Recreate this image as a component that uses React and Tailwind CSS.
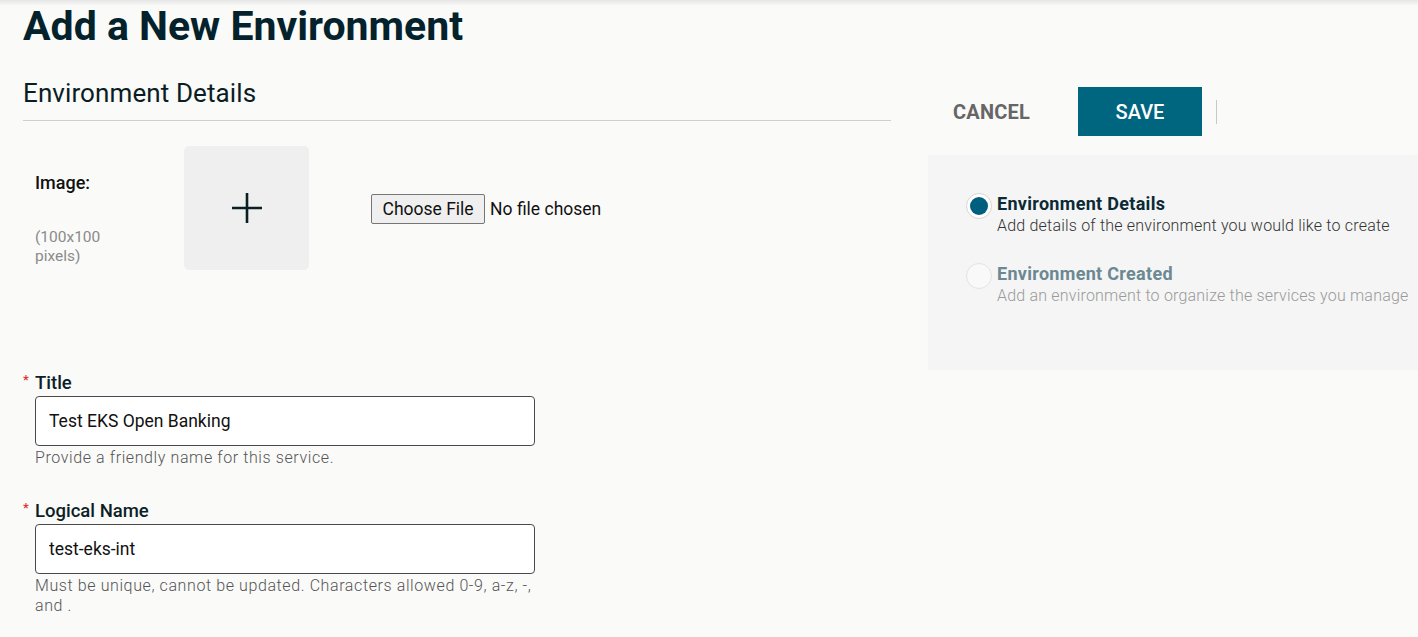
function Field({ label, value, help }) {
  return (
    <div className="flex flex-col">
      <label className="flex items-start text-[18.5px] leading-[22px] font-medium text-[#0d1f26]">
        <span className="w-[12px] pt-[1px] text-[13px] leading-[14px] text-[#d9342b]">*</span>
        <span>{label}</span>
      </label>
      <div className="pl-[12px]">
        <input
          readOnly
          value={value}
          className="mt-[2px] h-[50px] w-[500px] rounded-[4px] border border-[#4a4a4a] bg-white px-[13px] text-[17.5px] text-[#111] outline-none"
        />
        <p className="mt-[2px] w-[500px] text-[16px] leading-[20px] font-light tracking-[0.6px] text-[#555]">
          {help}
        </p>
      </div>
    </div>
  );
}

function Step({ active, title, text }) {
  return (
    <div className="flex items-start gap-[5px]">
      <div
        className={
          active
            ? "flex h-[26px] w-[26px] shrink-0 items-center justify-center rounded-full border border-[#d6d6d6] bg-white"
            : "h-[26px] w-[26px] shrink-0 rounded-full border border-[#e3e3e3] bg-[#f9f9f9]"
        }
      >
        {active && <div className="h-[18px] w-[18px] rounded-full bg-[#005f7f]" />}
      </div>
      <div className="flex flex-col">
        <span
          className={
            active
              ? "text-[18px] leading-[22px] font-bold tracking-[0.3px] text-[#0b2a35]"
              : "text-[18px] leading-[22px] font-bold tracking-[0.3px] text-[#6b8893]"
          }
        >
          {title}
        </span>
        <span
          className={
            active
              ? "text-[16px] leading-[22px] font-light tracking-[0.2px] text-[#333]"
              : "text-[16px] leading-[22px] font-light tracking-[0.2px] text-[#9a9a9a]"
          }
        >
          {text}
        </span>
      </div>
    </div>
  );
}

export default function App() {
  return (
    <div
      className="relative min-h-[637px] w-[1418px] overflow-hidden bg-[#fafaf9]"
      style={{ fontFamily: "Roboto, 'Liberation Sans', sans-serif" }}
    >
      <div className="absolute left-0 right-0 top-0 h-[6px] bg-gradient-to-b from-[#e6e6e6] to-transparent" />

      <div className="flex">
        {/* LEFT COLUMN */}
        <div className="w-[891px] pl-[23px]">
          <h1 className="mt-[2px] text-[41px] leading-[48px] font-bold text-[#03222b]">
            Add a New Environment
          </h1>

          <div className="mt-[28px] border-b border-[#cfcfcf] pb-[12px]">
            <h2 className="text-[26px] leading-[30px] font-normal tracking-[0.1px] text-[#0b1d24]">
              Environment Details
            </h2>
          </div>

          {/* Image */}
          <div className="mt-[25px] flex items-start">
            <div className="w-[161px] pl-[12px] pt-[26px]">
              <p className="text-[18px] leading-[22px] font-medium text-[#111]">Image:</p>
              <p className="mt-[34px] text-[15.5px] leading-[19px] text-[#8a8a8a]">
                (100x100
                <br />
                pixels)
              </p>
            </div>
            <div className="flex h-[124px] w-[125px] items-center justify-center rounded-[5px] bg-[#efefef]">
              <svg width="32" height="32" viewBox="0 0 32 32" fill="none">
                <path d="M16 1v30M1 16h30" stroke="#0d1f26" strokeWidth="2.6" />
              </svg>
            </div>
            <div className="ml-[62px] mt-[48px]">
              <input
                type="file"
                className="text-[17.5px] text-[#111] file:mr-[5px] file:rounded-[2px] file:border file:border-[#767676] file:bg-[#efefef] file:px-[10.5px] file:py-[1px] file:text-[17.5px] file:text-[#111]"
              />
            </div>
          </div>

          {/* Fields */}
          <div className="mt-[102px] flex flex-col gap-[32px]">
            <Field
              label="Title"
              value="Test EKS Open Banking"
              help="Provide a friendly name for this service."
            />
            <Field
              label="Logical Name"
              value="test-eks-int"
              help="Must be unique, cannot be updated. Characters allowed 0-9, a-z, -, and ."
            />
          </div>
        </div>

        {/* RIGHT COLUMN */}
        <div className="flex-1 pl-[37px]">
          <div className="mt-[87px] flex items-center">
            <button className="ml-[25px] text-[20px] font-bold text-[#666] tracking-[0.2px]">
              CANCEL
            </button>
            <button className="ml-[48px] h-[49px] w-[124px] bg-[#00667f] text-[20px] font-medium text-white">
              SAVE
            </button>
            <div className="ml-[14px] h-[24px] w-px bg-[#c8c8c8]" />
          </div>

          <div className="mt-[19px] flex h-[215px] flex-col gap-[26px] bg-[#f5f5f5] pl-[38px] pt-[38px]">
            <Step
              active
              title="Environment Details"
              text="Add details of the environment you would like to create"
            />
            <Step
              title="Environment Created"
              text="Add an environment to organize the services you manage"
            />
          </div>
        </div>
      </div>
    </div>
  );
}
